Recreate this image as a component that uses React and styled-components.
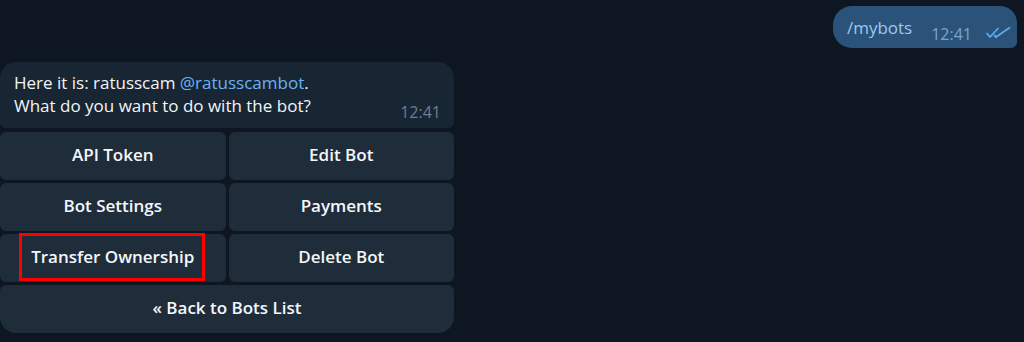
import React from 'react';
import styled, { createGlobalStyle } from 'styled-components';

const Global = createGlobalStyle`
  html, body { margin: 0; padding: 0; background: #0e1621; }
  body {
    font-family: "Open Sans", "Noto Sans", sans-serif;
    width: 1024px; height: 342px; overflow: hidden;
  }
`;

const Page = styled.div`
  display: flex;
  flex-direction: column;
  padding-top: 6px;
  gap: 14px;
`;

const OutRow = styled.div`
  display: flex;
  justify-content: flex-end;
  padding-right: 7px;
`;

const OutBubble = styled.div`
  background: #2b5278;
  border-radius: 19px 17px 6px 19px;
  height: 42px;
  box-sizing: border-box;
  padding: 0 6px 0 14px;
  display: flex;
  align-items: flex-start;
  gap: 19px;
`;

const OutText = styled.span`
  color: #9ccaf0;
  font-size: 17px;
  line-height: 22px;
  padding-top: 11px;
`;

const Meta = styled.span`
  display: flex;
  align-items: flex-start;
  gap: 14px;
  padding-top: 18px;
  color: #78a5cd;
  font-size: 16px;
  line-height: 20px;
`;

const CheckIcon = styled.svg`
  margin-top: 3px;
  flex: none;
`;

const Card = styled.div`
  width: 454px;
  display: flex;
  flex-direction: column;
  gap: 3px;
`;

const InBubble = styled.div`
  background: #182533;
  border-radius: 16px 16px 6px 6px;
  padding: 9px 13px 11px 14px;
  display: flex;
  align-items: flex-end;
  justify-content: space-between;
  margin-bottom: 1px;
`;

const InText = styled.div`
  color: #f2f5f8;
  font-size: 17px;
  line-height: 23px;
`;

const Link = styled.span`
  color: #6ab3f3;
`;

const Time = styled.span`
  color: #6d7f8f;
  font-size: 16px;
  line-height: 20px;
  margin-bottom: -5px;
`;

const Grid = styled.div`
  display: grid;
  grid-template-columns: 1fr 1fr;
  gap: 3px;
`;

const KeyButton = styled.div`
  position: relative;
  height: 48px;
  box-sizing: border-box;
  padding-bottom: 4px;
  background: #1f2c3a;
  border-radius: ${p => (p.$wide ? '6px 6px 16px 16px' : '6px')};
  display: flex;
  align-items: center;
  justify-content: center;
  color: #f5f7fa;
  font-size: 17px;
  font-weight: 600;
  grid-column: ${p => (p.$wide ? '1 / span 2' : 'auto')};
`;

const Highlight = styled.span`
  position: absolute;
  left: 19px;
  top: -1px;
  width: 186px;
  height: 48px;
  box-sizing: border-box;
  border: 3px solid #ff0000;
`;

const Checks = () => (
  <CheckIcon width="25" height="12" viewBox="0 0 25 12" fill="none" stroke="#5fa8e8" strokeWidth="1.8" strokeLinecap="round" strokeLinejoin="round">
    <path d="M1 6.5 L4 10 L12 1.5" />
    <path d="M10 10 L23.5 0.8" />
    <path d="M8.5 8.5 L10 10" />
  </CheckIcon>
);

export default function App() {
  return (
    <>
      <Global />
      <Page>
        <OutRow>
          <OutBubble>
            <OutText>/mybots</OutText>
            <Meta>
              12:41
              <Checks />
            </Meta>
          </OutBubble>
        </OutRow>
        <Card>
          <InBubble>
            <InText>
              Here it is: ratusscam <Link>@ratusscambot</Link>.<br />
              What do you want to do with the bot?
            </InText>
            <Time>12:41</Time>
          </InBubble>
          <Grid>
            <KeyButton>API Token</KeyButton>
            <KeyButton>Edit Bot</KeyButton>
            <KeyButton>Bot Settings</KeyButton>
            <KeyButton>Payments</KeyButton>
            <KeyButton>
              Transfer Ownership
              <Highlight />
            </KeyButton>
            <KeyButton>Delete Bot</KeyButton>
            <KeyButton $wide>« Back to Bots List</KeyButton>
          </Grid>
        </Card>
      </Page>
    </>
  );
}
